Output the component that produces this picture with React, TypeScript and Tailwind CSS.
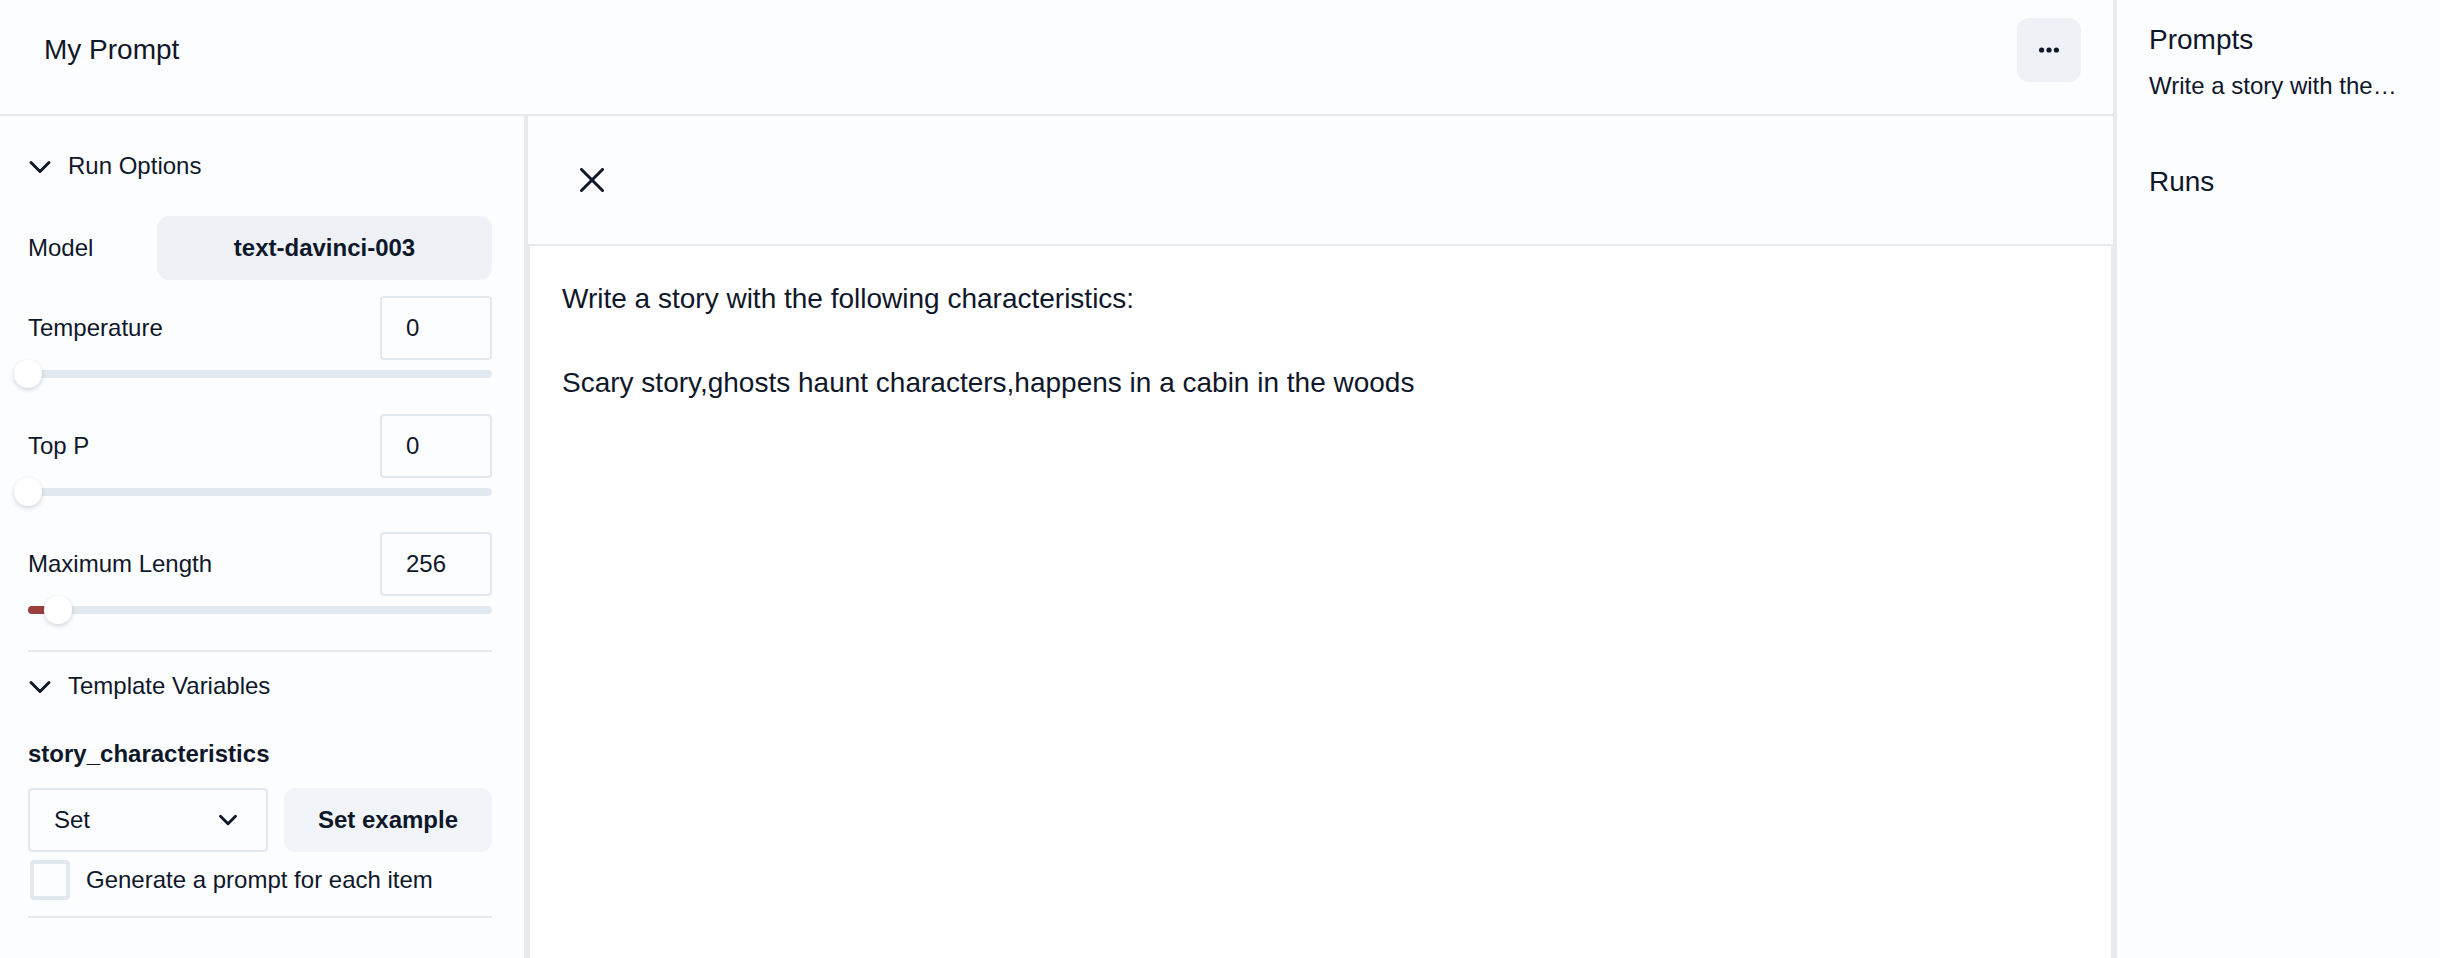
import { useState } from "react";

type SliderFieldProps = { id: string; label: string; initial: number; max: number; step: number };

function Chevron({ className, strokeWidth }: { className: string; strokeWidth: number }) {
  return (
    <svg viewBox="0 0 24 12" className={className} fill="none" stroke="currentColor" strokeWidth={strokeWidth} strokeLinecap="round" strokeLinejoin="round" overflow="visible" aria-hidden="true">
      <path d="M3 1.5 L12 10.5 L21 1.5" />
    </svg>
  );
}

function SliderField({ id, label, initial, max, step }: SliderFieldProps) {
  const [value, setValue] = useState(initial);
  return (
    <div className="pb-9">
      <div className="flex items-center justify-between">
        <label htmlFor={id}>{label}</label>
        <input
          id={id}
          type="text"
          inputMode="decimal"
          value={value}
          onChange={(e) => setValue(Number(e.target.value) || 0)}
          className="h-16 w-28 rounded border-2 border-[#e2e8f0] bg-transparent px-6"
        />
      </div>
      <div className="mt-2.5 grid h-2 items-center">
        <div className="col-start-1 row-start-1 h-2 overflow-hidden rounded bg-[#e2e8f0]">
          <div className="h-2 bg-[#9b403d]" style={{ width: `${(value / max) * 100}%` }} />
        </div>
        <input
          type="range"
          aria-label={label}
          min={0}
          max={max}
          step={step}
          value={value}
          onChange={(e) => setValue(Number(e.target.value))}
          className="col-start-1 row-start-1 -mx-3.5 h-2 w-[calc(100%+28px)] cursor-pointer appearance-none bg-transparent [&::-webkit-slider-thumb]:size-7 [&::-webkit-slider-thumb]:appearance-none [&::-webkit-slider-thumb]:rounded-full [&::-webkit-slider-thumb]:bg-white [&::-webkit-slider-thumb]:shadow-[0_2px_5px_rgba(0,0,0,0.16)]"
        />
      </div>
    </div>
  );
}

function SectionToggle({ children }: { children: string }) {
  return (
    <button type="button" className="flex h-9 items-center gap-4 text-left">
      <Chevron className="mt-0.5 h-3 w-6" strokeWidth={3} />
      {children}
    </button>
  );
}

export default function App() {
  const [prompt, setPrompt] = useState(
    "Write a story with the following characteristics:\n\nScary story,ghosts haunt characters,happens in a cabin in the woods",
  );
  return (
    <div className="flex min-h-screen bg-[#fcfdff] font-['Liberation_Sans',Arial,sans-serif] text-2xl leading-9 text-[#0f172a]">
      <div className="flex min-w-0 flex-1 flex-col">
        <header className="flex items-center justify-between border-b-2 border-[#e8eaed] pt-[18px] pr-8 pb-8 pl-11">
          <h1 className="text-[28px] leading-[42px]">My Prompt</h1>
          <button type="button" aria-label="More options" className="flex size-16 items-center justify-center rounded-xl bg-[#eef1f6]">
            <svg viewBox="0 0 20 6" className="h-1.5 w-5" fill="currentColor" aria-hidden="true">
              <circle cx="2.6" cy="3" r="2.6" />
              <circle cx="10" cy="3" r="2.6" />
              <circle cx="17.4" cy="3" r="2.6" />
            </svg>
          </button>
        </header>
        <div className="flex flex-1">
          <aside className="w-[528px] shrink-0 border-r-4 border-[#e8eaed] pt-8 pr-8 pl-7">
            <section className="border-b-2 border-[#e8eaed]">
              <SectionToggle>Run Options</SectionToggle>
              <div className="mt-8 mb-4 flex items-center justify-between">
                <span id="model-label">Model</span>
                <button type="button" aria-describedby="model-label" className="h-16 w-[335px] rounded-xl bg-[#eef1f6] font-bold">
                  text-davinci-003
                </button>
              </div>
              <SliderField id="temperature" label="Temperature" initial={0} max={1} step={0.01} />
              <SliderField id="top-p" label="Top P" initial={0} max={1} step={0.01} />
              <SliderField id="maximum-length" label="Maximum Length" initial={256} max={4000} step={1} />
            </section>
            <section className="border-b-2 border-[#e8eaed] pt-4 pb-4">
              <SectionToggle>Template Variables</SectionToggle>
              <h2 className="mt-8 font-bold">story_characteristics</h2>
              <div className="mt-4 flex gap-4">
                <div className="grid w-60 items-center">
                  <select aria-label="Variable type" className="col-start-1 row-start-1 h-16 appearance-none rounded border-2 border-[#e2e8f0] bg-transparent px-6">
                    <option>Set</option>
                  </select>
                  <Chevron className="pointer-events-none col-start-1 row-start-1 mr-[30px] h-2.5 w-5 justify-self-end" strokeWidth={3.5} />
                </div>
                <button type="button" className="h-16 flex-1 rounded-xl bg-[#f1f5f9] font-bold">
                  Set example
                </button>
              </div>
              <label className="mt-2 flex h-10 items-center gap-4 pl-0.5">
                <input type="checkbox" className="size-10 appearance-none rounded border-4 border-[#e2e8f0] checked:bg-[#9b403d]" />
                Generate a prompt for each item
              </label>
            </section>
          </aside>
          <main className="flex min-w-0 flex-1 flex-col">
            <div className="flex h-32 items-center pl-[52px]">
              <button type="button" aria-label="Close">
                <svg viewBox="0 0 24 24" className="size-6" fill="none" stroke="currentColor" strokeWidth="3" strokeLinecap="round" aria-hidden="true">
                  <path d="M1.5 1.5 L22.5 22.5 M22.5 1.5 L1.5 22.5" />
                </svg>
              </button>
            </div>
            <textarea
              aria-label="Prompt"
              spellCheck={false}
              value={prompt}
              onChange={(e) => setPrompt(e.target.value)}
              className="flex-1 resize-none border-2 border-b-0 border-[#e8eaed] bg-white p-8 text-[28px] leading-[42px] outline-none"
            />
          </main>
        </div>
      </div>
      <aside className="w-[327px] shrink-0 border-l-4 border-[#e8eaed] px-8 pt-5">
        <h2 className="text-[28px] leading-10">Prompts</h2>
        <a href="#prompt" className="mt-2 block whitespace-nowrap">Write a story with the…</a>
        <h2 className="mt-[58px] text-[28px] leading-10">Runs</h2>
      </aside>
    </div>
  );
}
